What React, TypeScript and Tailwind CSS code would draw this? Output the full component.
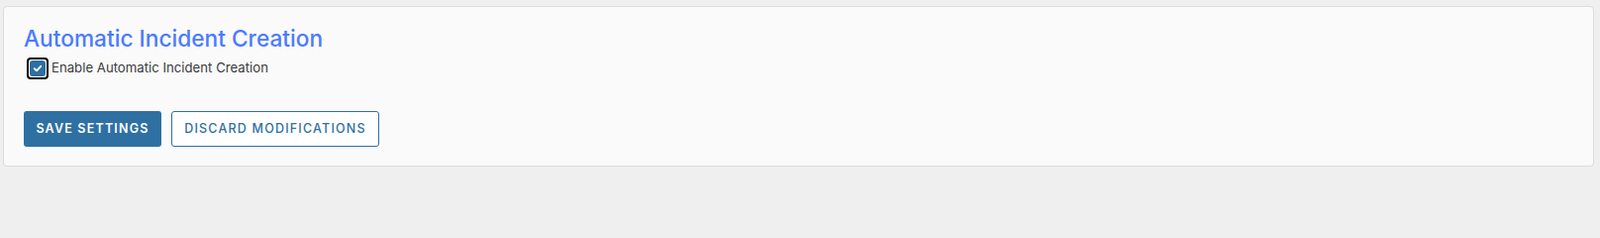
export default function App() {
  return (
    <div
      className="min-h-screen bg-[#efefef] pl-[3px] pr-[6px] pt-[6px]"
      style={{ fontFamily: 'Inter, "Noto Sans", sans-serif' }}
    >
      <div className="h-[162px] rounded-[4px] border border-[#dcdcdc] bg-[#fafafa] px-[20px] pt-[17px]">
        <h2 className="text-[22.7px] font-medium leading-[30px] text-[#4a7bff]">
          Automatic Incident Creation
        </h2>
        <label className="mt-[4px] flex items-center gap-[3px]">
          <span className="ml-[3px] flex h-[22px] w-[22px] items-center justify-center rounded-[4px] border-2 border-black bg-white">
            <span className="flex h-[16px] w-[16px] items-center justify-center rounded-[3px] bg-[#2f6fa1]">
              <svg width="10" height="10" viewBox="0 0 10 10" fill="none">
                <path d="M1.8 5.2 L4 7.3 L8.2 2.8" stroke="white" strokeWidth="1.9" strokeLinecap="round" strokeLinejoin="round" />
              </svg>
            </span>
          </span>
          <span className="text-[13.2px] text-[#3a3a3a]">Enable Automatic Incident Creation</span>
        </label>
        <div className="mt-[32px] flex gap-[10px]">
          <button className="h-[36px] w-[139px] rounded-[3px] bg-[#2e70a2] text-[12.5px] font-semibold tracking-[1.2px] text-white">
            SAVE SETTINGS
          </button>
          <button className="h-[36px] w-[210px] rounded-[3px] border border-[#2e70a2] bg-white text-[12.5px] font-medium tracking-[1.2px] text-[#2e70a2]">
            DISCARD MODIFICATIONS
          </button>
        </div>
      </div>
    </div>
  );
}
